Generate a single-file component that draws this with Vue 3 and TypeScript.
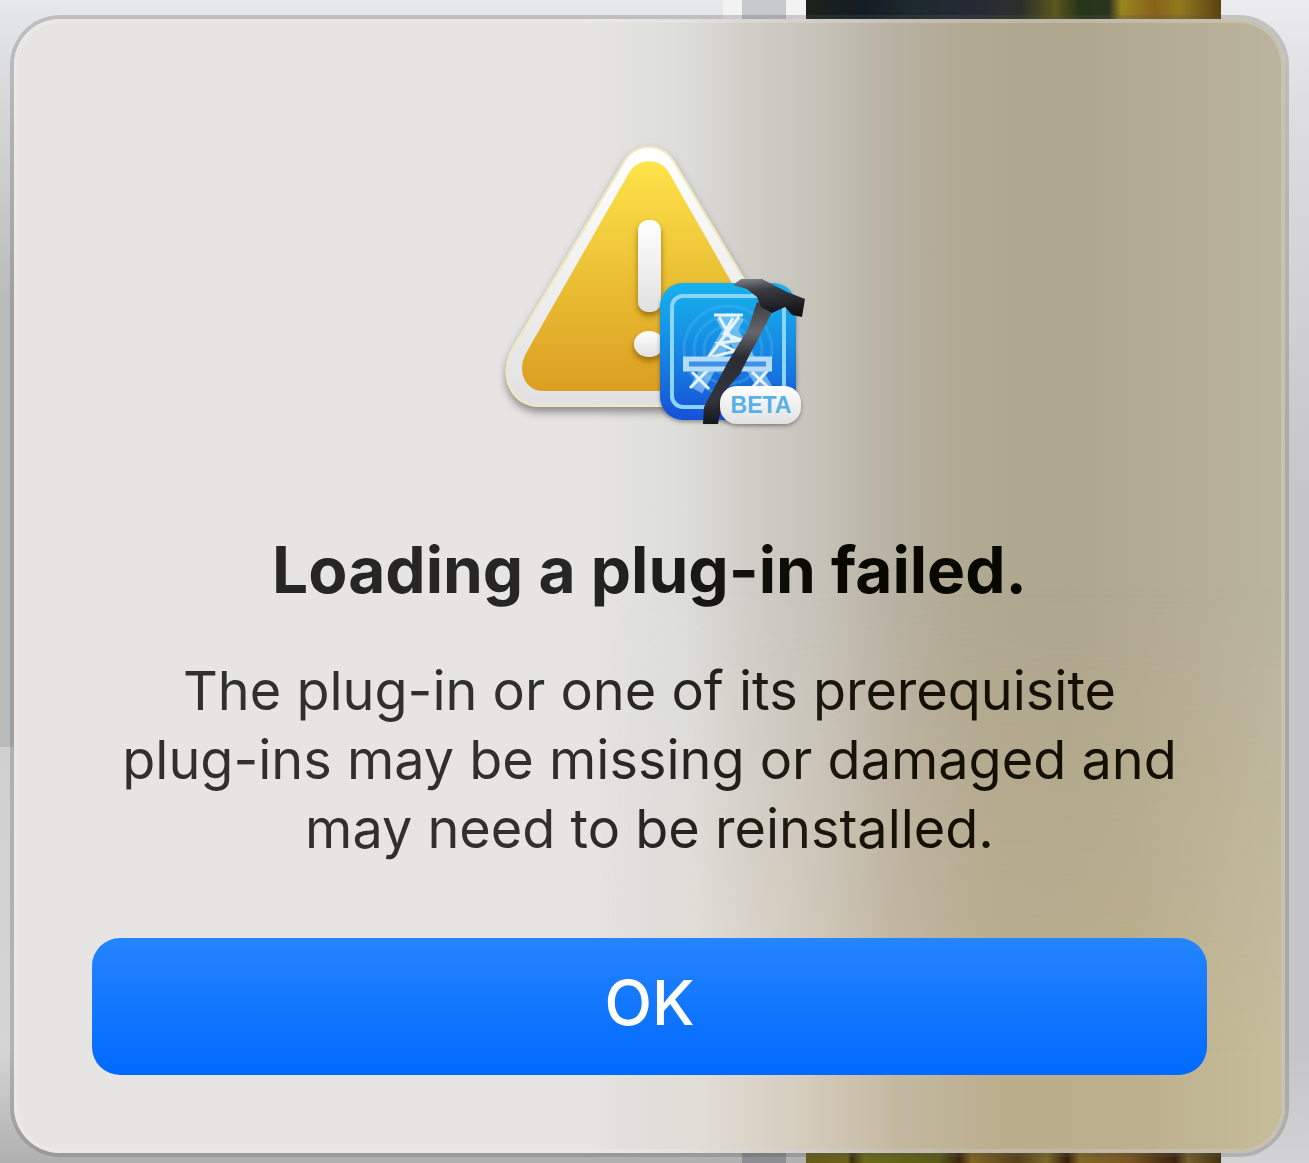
<script setup lang="ts">
const title = 'Loading a plug-in failed.'
const lines: string[] = [
  'The plug-in or one of its prerequisite',
  'plug-ins may be missing or damaged and',
  'may need to be reinstalled.',
]
</script>

<template>
  <main class="desktop">
    <section class="dialog" role="alertdialog" aria-labelledby="alert-title" aria-describedby="alert-text">
      <svg class="icon" viewBox="490 130 320 310" aria-hidden="true">
        <defs>
          <linearGradient id="rim" x1="0" y1="0" x2="0" y2="1">
            <stop offset="0" stop-color="#ffffff" />
            <stop offset="1" stop-color="#e1e1e1" />
          </linearGradient>
          <linearGradient id="gold" x1="0" y1="0" x2="0" y2="1">
            <stop offset="0" stop-color="#fee44a" />
            <stop offset="0.5" stop-color="#ebc034" />
            <stop offset="1" stop-color="#db9e22" />
          </linearGradient>
          <linearGradient id="blue" x1="0" y1="0" x2="0" y2="1">
            <stop offset="0" stop-color="#12b2ee" />
            <stop offset="0.5" stop-color="#1287e2" />
            <stop offset="1" stop-color="#1750d8" />
          </linearGradient>
          <linearGradient id="handle" x1="0" y1="0" x2="0" y2="1">
            <stop offset="0" stop-color="#3c3d42" />
            <stop offset="0.25" stop-color="#66666c" />
            <stop offset="0.45" stop-color="#2b2c35" />
            <stop offset="0.8" stop-color="#34353d" />
            <stop offset="1" stop-color="#15161b" />
          </linearGradient>
          <linearGradient id="head" x1="0" y1="0" x2="0.2" y2="1">
            <stop offset="0" stop-color="#85858d" />
            <stop offset="0.35" stop-color="#3a3b40" />
            <stop offset="1" stop-color="#141518" />
          </linearGradient>
          <filter id="shade" x="-20%" y="-20%" width="140%" height="150%">
            <feDropShadow dx="0" dy="5" stdDeviation="4" flood-color="#000000" flood-opacity="0.4" />
          </filter>
          <filter id="mark" x="-60%" y="-20%" width="220%" height="150%">
            <feDropShadow dx="0" dy="4" stdDeviation="3" flood-color="#7a5200" flood-opacity="0.7" />
          </filter>
          <filter id="pill" x="-20%" y="-20%" width="140%" height="160%">
            <feDropShadow dx="0" dy="2" stdDeviation="2" flood-color="#000000" flood-opacity="0.35" />
          </filter>
        </defs>

        <path filter="url(#shade)" fill="url(#rim)" stroke="#f2e9bd" stroke-width="2"
          d="M624 162 C636 142 662 142 674 162 L786 350 C799 378 786 406 758 406 H540 C512 406 499 378 512 350 Z" />
        <path fill="url(#gold)"
          d="M630 171 C639 158 659 158 668 171 L773 355 C781 373 772 391 755 391 H543 C526 391 517 373 525 355 Z" />
        <g filter="url(#mark)" fill="url(#rim)">
          <rect x="638" y="220" width="23" height="92" rx="10" />
          <ellipse cx="649" cy="344" rx="15" ry="13" />
        </g>

        <g filter="url(#pill)">
          <rect x="660" y="283" width="136" height="137" rx="23" fill="url(#blue)" />
        </g>
        <rect x="672" y="296" width="112" height="111" rx="11" fill="none" stroke="#8bd5f8" stroke-width="4" />
        <g fill="none" stroke="#56bdf2" stroke-width="3" opacity="0.3">
          <circle cx="728" cy="350" r="44" />
          <circle cx="728" cy="350" r="34" />
          <circle cx="728" cy="350" r="24" />
        </g>
        <g fill="none" stroke="#b5dcf8">
          <path stroke-width="14" opacity="0.55" d="M738 316 L696 390 M722 316 L766 389" />
          <path stroke="#e5f4fd" stroke-width="3"
            d="M714 315 H743 M719 317 L733 341 M739 317 L708 358 M733 318 L724 334 L742 340 L719 343 L735 351 L712 357 M692 372 L709 389 M708 370 L690 388 M752 372 L770 389 M768 370 L752 388" />
          <path stroke-width="15" d="M683 364 H772" />
          <path stroke="#3f92e8" stroke-width="5" d="M689 364 H766" />
        </g>
        <path fill="url(#handle)"
          d="M757 302 L774 308 L762 332 L751 352 L740 374 L724 392 L718 424 L703 424 L704 407 L728 362 L748 329 Z" />
        <path fill="url(#head)"
          d="M733 285 L741 279 H762 L787 292 L805 299 L802 317 L792 315 L785 307 L772 313 L761 307 L757 297 L747 289 Z" />
        <g filter="url(#pill)">
          <rect x="720" y="386" width="81" height="38" rx="17" fill="url(#rim)" />
        </g>
        <text class="beta" x="761" y="413" text-anchor="middle">BETA</text>
      </svg>

      <h1 id="alert-title" class="title">{{ title }}</h1>
      <p id="alert-text" class="message">
        <span v-for="line in lines" :key="line" class="line">{{ line }}</span>
      </p>
      <button type="button" class="ok">OK</button>
    </section>
  </main>
</template>

<style>
body {
  margin: 0;
}
</style>

<style scoped>
.desktop {
  box-sizing: border-box;
  display: flex;
  flex-direction: column;
  min-height: 100vh;
  padding: 19px 24px 10px 14px;
  overflow: hidden;
  font-family: Inter, "Liberation Sans", sans-serif;
  background:
    linear-gradient(90deg, #1c211a 0%, #141c25 14%, #1d292b 26%, #242936 38%, #2c3029 52%, #5c571c 60%, #25351a 66%, #2d341f 73%, #9b8420 76%, #876319 84%, #92791d 90%, #5b4211 100%) 806px 0 / 415px 19px no-repeat,
    linear-gradient(90deg, #655c1b 0%, #6a611d 10%, #3e300e 11%, #6b6a1a 14%, #5b5917 32%, #3b250e 37%, #806822 40%, #55401a 51%, #7b6829 58%, #352009 63%, #7f6924 66%, #795622 78%, #3b2510 89%, #75602f 92%, #42330e 100%) 806px 100% / 415px 10px no-repeat,
    linear-gradient(90deg, #f2f2f2 19px, transparent 19px, transparent 63px, #f2f2f2 63px) 723px 0 / 83px 19px no-repeat,
    linear-gradient(#c8c9cd, #8d8e94) 742px 0 / 44px 100% no-repeat,
    linear-gradient(#e6e8ea 0, #dcdee0 60px, #b9bbbc 300px, #b9bbbc 747px, #d0d0d0 747px, #d5d5d5 1050px, #b0b0b0 100%) 0 0 / 806px 100% no-repeat,
    linear-gradient(#ececee 0, #dedee0 100px, #c5c5c9 500px, #c5c5c9 1050px, #d2d2d4 100%);
}

.dialog {
  position: relative;
  display: flex;
  flex: 1;
  flex-direction: column;
  align-items: center;
  padding: 111px 78px 78px;
  border-radius: 46px;
  background: linear-gradient(90deg, #e6e5e3 45%, #dcddd9 53%, #d0cdc7 58%, #c4c1b7 64%, #b9b1a3 69%, #b1a992 75%, #aea68e 83%, #b5ad95 92%, #bbb49e 100%);
  box-shadow: 0 0 0 4px rgba(80, 84, 86, 0.26), inset 0 0 0 4px rgba(255, 245, 240, 0.22);
}

.dialog::before {
  position: absolute;
  inset: 4px;
  border-radius: 42px;
  background: linear-gradient(90deg, transparent 46%, #e1ddd6 54%, #d5ccbd 62%, #c3b79f 70%, #bbae8d 78%, #bcaf8b 88%, #c6bd9b 100%);
  mask-image: linear-gradient(transparent 50%, #000000 92%);
  content: "";
}

.icon,
.title,
.message,
.ok {
  position: relative;
}

.icon {
  width: 320px;
  height: 310px;
  overflow: visible;
}

.beta {
  fill: #58b0e8;
  font: 700 23px "Liberation Sans", sans-serif;
}

.title {
  margin: 90px 0 0;
  font-size: 64px;
  font-weight: 700;
  line-height: 80px;
  white-space: nowrap;
  background: linear-gradient(90deg, #262626 40%, #080700 75%);
  background-clip: text;
  -webkit-text-fill-color: transparent;
}

.message {
  margin: 46px 0 0;
  font-size: 54px;
  line-height: 69px;
  text-align: center;
  white-space: nowrap;
  background: linear-gradient(90deg, #303030 40%, #151004 75%);
  background-clip: text;
  -webkit-text-fill-color: transparent;
}

.line {
  display: block;
}

.ok {
  align-self: stretch;
  height: 137px;
  margin: 75px 0 0;
  padding: 0 0 8px;
  border: 0;
  border-radius: 28px;
  background: linear-gradient(#2585ff, #0069ff);
  color: #ffffff;
  font: 500 62px Inter, "Liberation Sans", sans-serif;
}
</style>
